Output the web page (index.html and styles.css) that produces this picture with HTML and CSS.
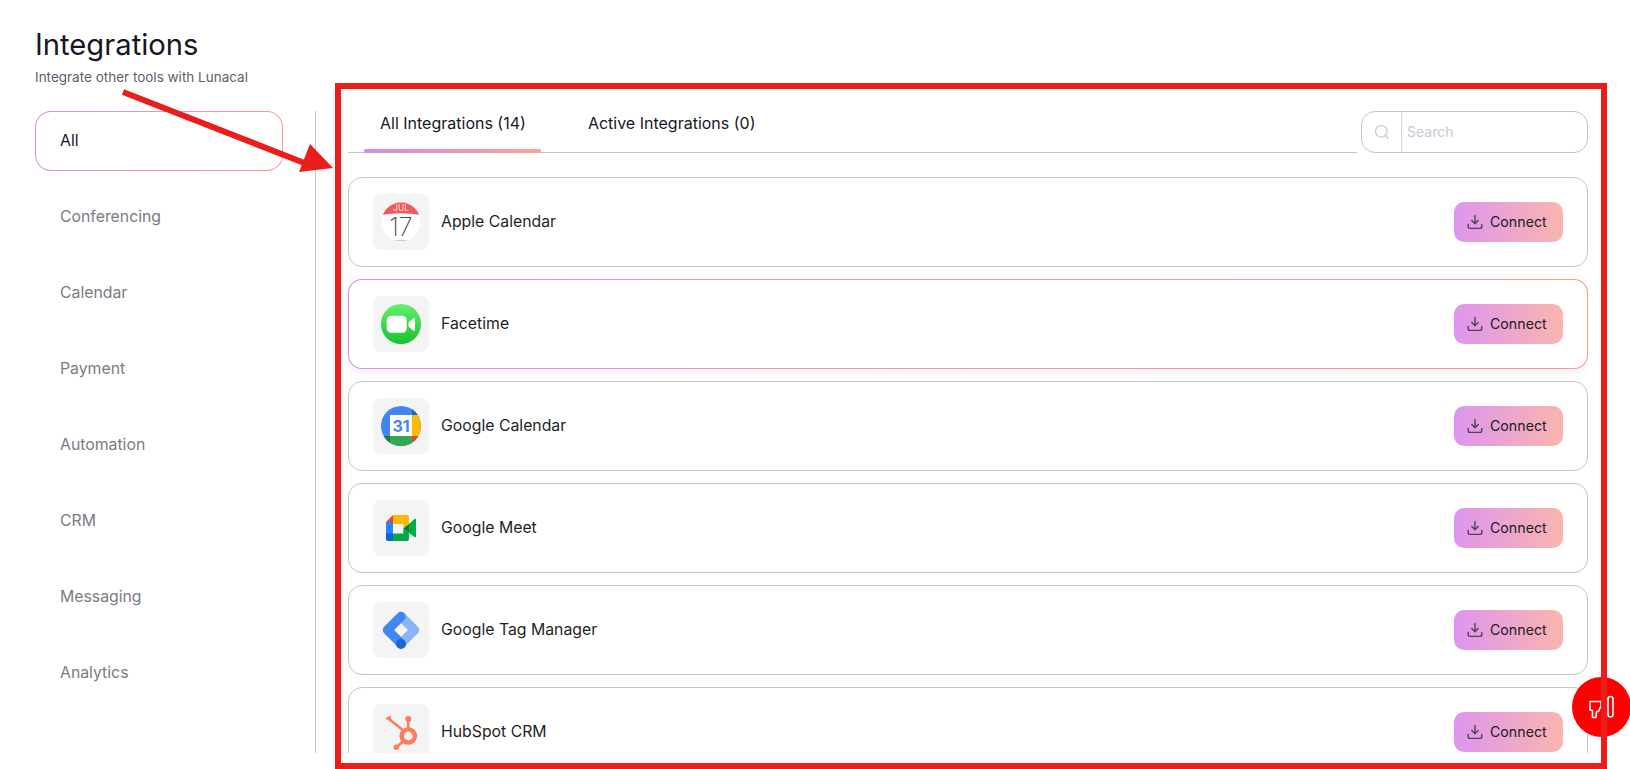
FILE: index.html
```html
<!DOCTYPE html>
<html lang="en">
<head>
<meta charset="utf-8">
<title>Integrations</title>
<link rel="stylesheet" href="styles.css">
</head>
<body>
<svg class="defs" width="0" height="0">
  <symbol id="dl" viewBox="0 0 16 16"><path d="M8 1.500v8M4.800 6.600L8 9.800l3.200-3.200M1.200 10.400v2a2 2 0 0 0 2 2h9.600a2 2 0 0 0 2-2v-2" fill="none" stroke="#4b4358" stroke-width="1.400" stroke-linecap="round" stroke-linejoin="round"/></symbol>
</svg>
<div class="page">
  <header class="head">
    <h1 class="title">Integrations</h1>
    <p class="sub">Integrate other tools with Lunacal</p>
  </header>
  <main class="main">
    <nav class="side">
      <a class="side-item active">All</a>
      <a class="side-item">Conferencing</a>
      <a class="side-item">Calendar</a>
      <a class="side-item">Payment</a>
      <a class="side-item">Automation</a>
      <a class="side-item">CRM</a>
      <a class="side-item">Messaging</a>
      <a class="side-item">Analytics</a>
    </nav>
    <section class="content">
      <div class="toolbar">
        <div class="tabs">
          <a class="tab tab-active">All Integrations (14)</a>
          <a class="tab">Active Integrations (0)</a>
        </div>
        <label class="search">
          <span class="search-icon">
            <svg width="16" height="16" viewBox="0 0 16 16" fill="none" stroke="#c4c4ca" stroke-width="1.200" stroke-linecap="round"><circle cx="7.300" cy="7.300" r="5.800"/><path d="M11.600 11.600l2.800 2.800"/></svg>
          </span>
          <span class="search-text">Search</span>
        </label>
      </div>
      <div class="list">
        <article class="card">
          <div class="tile">
            <svg class="logo" viewBox="0 0 40 40">
              <defs><clipPath id="c1"><circle cx="20" cy="20" r="19.500"/></clipPath></defs>
              <circle cx="20" cy="20" r="19.500" fill="#fff"/>
              <path d="M0 13Q20 9.500 40 13V0H0Z" fill="#f15a5a" clip-path="url(#c1)"/>
              <path d="M8 38.600h24" stroke="#c8c8c8" stroke-width="1" clip-path="url(#c1)"/>
              <text x="20" y="9.300" class="ac-month">JUL</text>
              <text x="20" y="34" class="ac-day">17</text>
            </svg>
          </div>
          <span class="name">Apple Calendar</span>
          <button class="connect"><svg class="dl"><use href="#dl"/></svg>Connect</button>
        </article>
        <article class="card card-hover">
          <div class="tile">
            <svg class="logo" viewBox="0 0 40 40">
              <defs><linearGradient id="ft" x1="0" y1="0" x2="0" y2="1"><stop offset="0" stop-color="#62f06f"/><stop offset="1" stop-color="#19c22f"/></linearGradient></defs>
              <circle cx="20" cy="20" r="20" fill="url(#ft)"/>
              <rect x="5.700" y="11.700" width="20" height="17" rx="4.500" fill="#fff"/>
              <path d="M27.500 18.400l5-4.400q1.500-.9 1.500 1v10.800q0 1.900-1.500 1l-5-4.400z" fill="#fff"/>
            </svg>
          </div>
          <span class="name">Facetime</span>
          <button class="connect"><svg class="dl"><use href="#dl"/></svg>Connect</button>
        </article>
        <article class="card">
          <div class="tile">
            <svg class="logo" viewBox="0 0 40 40">
              <defs><clipPath id="c3"><circle cx="20" cy="20" r="20"/></clipPath></defs>
              <g clip-path="url(#c3)">
                <rect width="40" height="40" fill="#4285f4"/>
                <rect x="31" y="0" width="9" height="9" fill="#1967d2"/>
                <rect x="31" y="9" width="9" height="21" fill="#fbbc04"/>
                <rect x="9" y="30" width="22" height="10" fill="#34a853"/>
                <rect x="0" y="30" width="9" height="10" fill="#188038"/>
                <path d="M31 30h9v10H31z" fill="#ea4335"/>
                <rect x="9" y="9" width="22" height="21" fill="#fff"/>
              </g>
              <text x="20" y="25.800" class="gc-day">31</text>
            </svg>
          </div>
          <span class="name">Google Calendar</span>
          <button class="connect"><svg class="dl"><use href="#dl"/></svg>Connect</button>
        </article>
        <article class="card">
          <div class="tile">
            <svg class="logo" viewBox="0 0 40 40">
              <path d="M12 7H26a2 2 0 0 1 2 2V16L22.300 20.500V16H12Z" fill="#ffba00"/>
              <path d="M12 7V14H5Z" fill="#ea4335"/>
              <rect x="5" y="14" width="7" height="12" fill="#2684fc"/>
              <path d="M5 25.500h7V33H7a2 2 0 0 1-2-2Z" fill="#0066da"/>
              <path d="M12 25.500H22.300V20.500L28 25V31a2 2 0 0 1-2 2H12Z" fill="#00ac47"/>
              <path d="M22.300 20.500L28 16V25Z" fill="#00832d"/>
              <path d="M28 16L33.500 11Q35 10.200 35 12V28Q35 29.800 33.500 29L28 25Z" fill="#00ac47"/>
            </svg>
          </div>
          <span class="name">Google Meet</span>
          <button class="connect"><svg class="dl"><use href="#dl"/></svg>Connect</button>
        </article>
        <article class="card">
          <div class="tile">
            <svg class="logo" viewBox="0 0 40 40" fill="none">
              <path d="M20 6.500L33.500 20L20 33.500" stroke="#8ab4f8" stroke-width="9.500" stroke-linejoin="round"/>
              <path d="M20 6.500L6.500 20L20 33.500" stroke="#4285f4" stroke-width="9.500" stroke-linejoin="round" stroke-linecap="round"/>
              <circle cx="20" cy="34" r="5" fill="#1967d2"/>
            </svg>
          </div>
          <span class="name">Google Tag Manager</span>
          <button class="connect"><svg class="dl"><use href="#dl"/></svg>Connect</button>
        </article>
        <article class="card">
          <div class="tile">
            <svg class="logo" viewBox="0 0 40 40" fill="none" stroke="#ff7a59">
              <circle cx="27.300" cy="24" r="6.600" stroke-width="4.400"/>
              <path d="M27.300 8v10" stroke-width="2.600"/>
              <circle cx="27.300" cy="7" r="3" fill="#ff7a59" stroke="none"/>
              <path d="M8 7L23 19" stroke-width="2.600"/>
              <path d="M4 6.500L9.500 3.500L10.500 9.500Z" fill="#ff7a59" stroke="none"/>
              <path d="M15.800 35L22.500 29" stroke-width="2.600"/>
              <circle cx="15.300" cy="35.300" r="2.700" fill="#ff7a59" stroke="none"/>
            </svg>
          </div>
          <span class="name">HubSpot CRM</span>
          <button class="connect"><svg class="dl"><use href="#dl"/></svg>Connect</button>
        </article>
      </div>
    </section>
  </main>
</div>
<button class="fab" aria-label="Feedback">
  <svg width="30" height="24" viewBox="0 0 30 24" fill="none" stroke="#fff" stroke-width="1.600" stroke-linejoin="round"><path d="M3 6.500H14V11L11.500 16.500H9.500L9 22.500H5.500V15.500L3 15Z"/><rect x="21" y="1.500" width="5" height="20.500" rx="2.500"/></svg>
</button>
<svg class="annotation" width="1630" height="769" viewBox="0 0 1630 769" fill="none">
  <rect x="338" y="86" width="1266" height="680" stroke="#ea1c1c" stroke-width="6"/>
  <path d="M123 92L312 166" stroke="#ea1c1c" stroke-width="6"/>
  <path d="M310 144L333 168L299 172Z" fill="#ea1c1c"/>
</svg>
</body>
</html>
```
FILE: styles.css
```css
* { box-sizing: border-box; }
html, body { margin: 0; height: 100%; }
body {
  background: #fff;
  color: #17171f;
  font-family: "Inter", "Noto Sans", sans-serif;
  overflow: hidden;
  position: relative;
}
.defs { position: absolute; }
.page { height: 769px; padding: 27px 42px 16px 35px; display: flex; flex-direction: column; }
.head { height: 84px; flex: none; }
.title { margin: 0; font-size: 29.200px; line-height: 36px; font-weight: 400; }
.sub { margin: 5px 0 0; font-size: 13.500px; line-height: 18px; color: #5f5f6c; }
.main { flex: 1; display: flex; min-height: 0; }
.side {
  width: 281px; flex: none;
  padding-right: 32px;
  border-right: 1px solid #c6c4cc;
  display: flex; flex-direction: column; gap: 16px;
}
.side-item {
  height: 60px; flex: none;
  display: flex; align-items: center;
  padding: 0 0 2px 24px;
  font-size: 15.800px; font-weight: 400;
  color: #7b7b85;
  border: 1px solid transparent;
  border-radius: 16px;
}
.side-item.active {
  color: #17171f;
  background: linear-gradient(#fff, #fff) padding-box, linear-gradient(90deg, #d88fe6, #ff9a90) border-box;
}
.content { flex: 1; min-width: 0; padding-left: 32px; display: flex; flex-direction: column; }
.toolbar { display: flex; height: 42px; flex: none; gap: 4px; }
.tabs {
  flex: 1; display: flex; gap: 31px;
  padding-left: 16px;
  border-bottom: 1px solid #c4c4cc;
}
.tab {
  position: relative;
  height: 41px; padding: 0 15px 17px 16px;
  display: flex; align-items: center;
  font-size: 16px; color: #17171f;
}
.tab-active::after {
  content: ""; position: absolute; left: 0; right: 0; bottom: -1px; height: 4px;
  border-radius: 2px;
  background: linear-gradient(90deg, #d08ee4, #ffa096);
}
.search {
  width: 227px; flex: none;
  display: flex; align-items: center;
  border: 1px solid #c6c4ca; border-radius: 14px;
}
.search-icon { width: 40px; height: 100%; flex: none; display: flex; align-items: center; justify-content: center; border-right: 1px solid #d4d4d8; }
.search-text { padding: 0 0 1px 5px; font-size: 14px; color: #c5cad6; }
.list { margin-top: 24px; flex: 1; min-height: 0; overflow: hidden; display: flex; flex-direction: column; gap: 12px; }
.card {
  height: 90px; flex: none;
  display: flex; align-items: center;
  padding: 0 24px;
  border: 1px solid #c6c4cc; border-radius: 14px;
  background: #fff;
}
.card-hover {
  background: linear-gradient(#fff, #fff) padding-box, linear-gradient(90deg, #d88fe6, #ff9a90) border-box;
  border-color: transparent;
  box-shadow: 0 2px 12px rgba(60, 50, 80, 0.10);
}
.tile { width: 56px; height: 56px; flex: none; border-radius: 8px; background: #f4f4f4; display: flex; align-items: center; justify-content: center; }
.logo { width: 40px; height: 40px; display: block; }
.name { margin-left: 12px; padding-bottom: 2px; flex: 1; font-size: 15.800px; color: #1f1f27; }
.connect {
  width: 109px; height: 40px; flex: none;
  display: flex; align-items: center; gap: 7px;
  padding: 0 0 1px 13px;
  border: 0; border-radius: 10px;
  font: 400 14.200px "Inter", sans-serif; color: #201a2c;
  background: linear-gradient(90deg, #dd95ee, #fab5ae);
}
.dl { width: 16px; height: 16px; flex: none; }
.ac-month { font: 300 8.500px "Inter", sans-serif; fill: #fff; text-anchor: middle; }
.ac-day { font: 200 25px "Inter", sans-serif; fill: #4a4a4a; text-anchor: middle; }
.gc-day { font: 700 16px "Inter", sans-serif; fill: #4285f4; text-anchor: middle; }
.fab {
  position: absolute; left: 1572px; top: 677px;
  width: 59px; height: 60px; padding: 0;
  border: 0; border-radius: 50%; background: #ff0000;
  display: flex; align-items: center; justify-content: center;
}
.annotation { position: absolute; left: 0; top: 0; pointer-events: none; }
```
